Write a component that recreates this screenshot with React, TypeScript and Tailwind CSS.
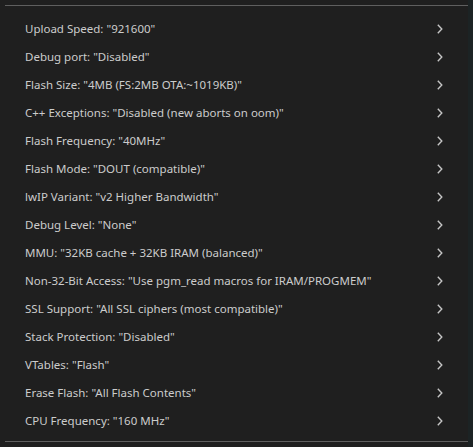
const settings = [
	["Upload Speed", "921600"],
	["Debug port", "Disabled"],
	["Flash Size", "4MB (FS:2MB OTA:~1019KB)"],
	["C++ Exceptions", "Disabled (new aborts on oom)"],
	["Flash Frequency", "40MHz"],
	["Flash Mode", "DOUT (compatible)"],
	["lwIP Variant", "v2 Higher Bandwidth"],
	["Debug Level", "None"],
	["MMU", "32KB cache + 32KB IRAM (balanced)"],
	["Non-32-Bit Access", "Use pgm_read macros for IRAM/PROGMEM"],
	["SSL Support", "All SSL ciphers (most compatible)"],
	["Stack Protection", "Disabled"],
	["VTables", "Flash"],
	["Erase Flash", "All Flash Contents"],
	["CPU Frequency", "160 MHz"],
];

function Chevron() {
	return (
		<svg width="16" height="16" viewBox="0 0 16 16" fill="none" className="text-[#c5c5c5]">
			<path d="M5.8 3.8 L9.8 8 L5.8 12.2" stroke="currentColor" strokeWidth="1.4" />
		</svg>
	);
}

export default function App() {
	return (
		<div
			className="flex h-[447px] w-[473px] bg-[#1f1f1f] text-[11.5px] text-[#cccccc]"
			style={{ fontFamily: '"Noto Sans", sans-serif' }}
		>
			<div className="flex w-[468px] flex-col pl-[5px] pt-[5px]">
				<div className="border-t border-[#5f5f5f]" />
				<ul className="flex flex-col pt-[9px] pb-[6px]">
					{settings.map(([name, value]) => (
						<li key={name} className="flex h-[28px] items-center justify-between pl-5 pr-5">
							<span>
								{name}: "{value}"
							</span>
							<Chevron />
						</li>
					))}
				</ul>
				<div className="border-t border-[#5f5f5f]" />
			</div>
			<div className="flex-1 bg-[#1c2324]" />
		</div>
	);
}
